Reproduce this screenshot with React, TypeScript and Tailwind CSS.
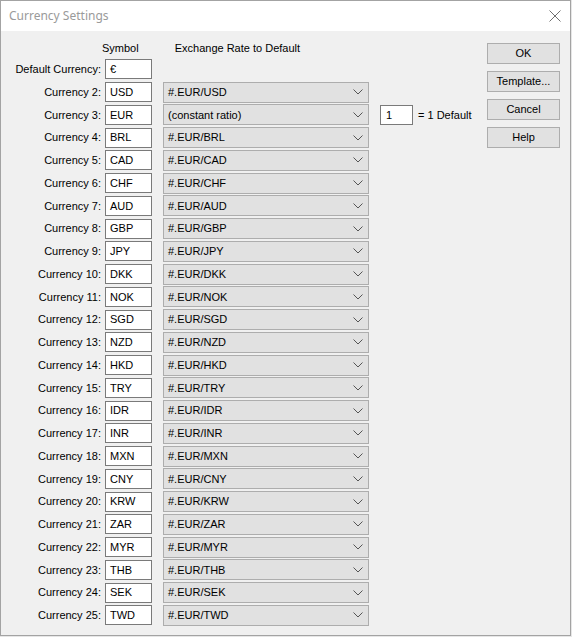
import React from "react";

const codes = [
  "USD", "EUR", "BRL", "CAD", "CHF", "AUD", "GBP", "JPY", "DKK", "NOK", "SGD", "NZD",
  "HKD", "TRY", "IDR", "INR", "MXN", "CNY", "KRW", "ZAR", "MYR", "THB", "SEK", "TWD",
];

const Chevron = () => (
  <svg width="10" height="6" viewBox="0 0 10 6" className="shrink-0">
    <path d="M0.5 0.5 L5 5 L9.5 0.5" fill="none" stroke="#555" strokeWidth="1" />
  </svg>
);

const TextBox = ({ value }: { value: string }) => (
  <div className="ml-[4px] flex h-[20px] w-[47px] items-center border border-[#7a7a7a] bg-white pl-[4px]">
    {value}
  </div>
);

const Select = ({ value }: { value: string }) => (
  <div className="ml-[11px] flex h-[21px] w-[206px] items-center justify-between border border-[#adadad] bg-[#e1e1e1] pl-[4px] pr-[5px]">
    <span>{value}</span>
    <Chevron />
  </div>
);

const Button = ({ label }: { label: string }) => (
  <div className="flex h-[21px] w-[73px] items-center justify-center border border-[#adadad] bg-[#e1e1e1]">
    {label}
  </div>
);

export default function App() {
  return (
    <div className="h-[637px] w-[572px] bg-[#e6e6e6]">
      <div
        className="flex h-[636px] w-[571px] flex-col border border-[#a3a3a3] text-[11px] text-black"
        style={{ fontFamily: '"Liberation Sans", Arial, sans-serif' }}
      >
        {/* Title bar */}
        <div className="flex h-[30px] shrink-0 items-center justify-between bg-white pl-[8px] pr-[9px]">
          <span
            className="text-[12px] text-[#9a9a9a]"
            style={{ fontFamily: '"Noto Sans", sans-serif' }}
          >
            Currency Settings
          </span>
          <svg width="12" height="12" viewBox="0 0 12 12">
            <path d="M0.5 0.5 L11.5 11.5 M11.5 0.5 L0.5 11.5" stroke="#707070" strokeWidth="1" />
          </svg>
        </div>

        {/* Body */}
        <div className="flex flex-1 bg-[#f0f0f0]">
          <div className="w-[486px] pt-[8px]">
            <div className="flex h-[19px] items-center">
              <span className="ml-[101px]">Symbol</span>
              <span className="ml-[36px]">Exchange Rate to Default</span>
            </div>
            <div className="flex h-[22.75px] items-center">
              <span className="w-[100px] text-right">Default Currency:</span>
              <TextBox value="€" />
            </div>
            {codes.map((code, i) => (
              <div key={code} className="flex h-[22.75px] items-center">
                <span className="w-[100px] text-right">Currency {i + 2}:</span>
                <TextBox value={code} />
                <Select value={code === "EUR" ? "(constant ratio)" : `#.EUR/${code}`} />
                {code === "EUR" && (
                  <>
                    <div className="ml-[11px] flex h-[20px] w-[33px] items-center border border-[#7a7a7a] bg-white pl-[5px]">
                      1
                    </div>
                    <span className="ml-[5px]">= 1 Default</span>
                  </>
                )}
              </div>
            ))}
          </div>
          <div className="flex flex-col gap-[7px] pt-[12px]">
            <Button label="OK" />
            <Button label="Template..." />
            <Button label="Cancel" />
            <Button label="Help" />
          </div>
        </div>
      </div>
    </div>
  );
}
